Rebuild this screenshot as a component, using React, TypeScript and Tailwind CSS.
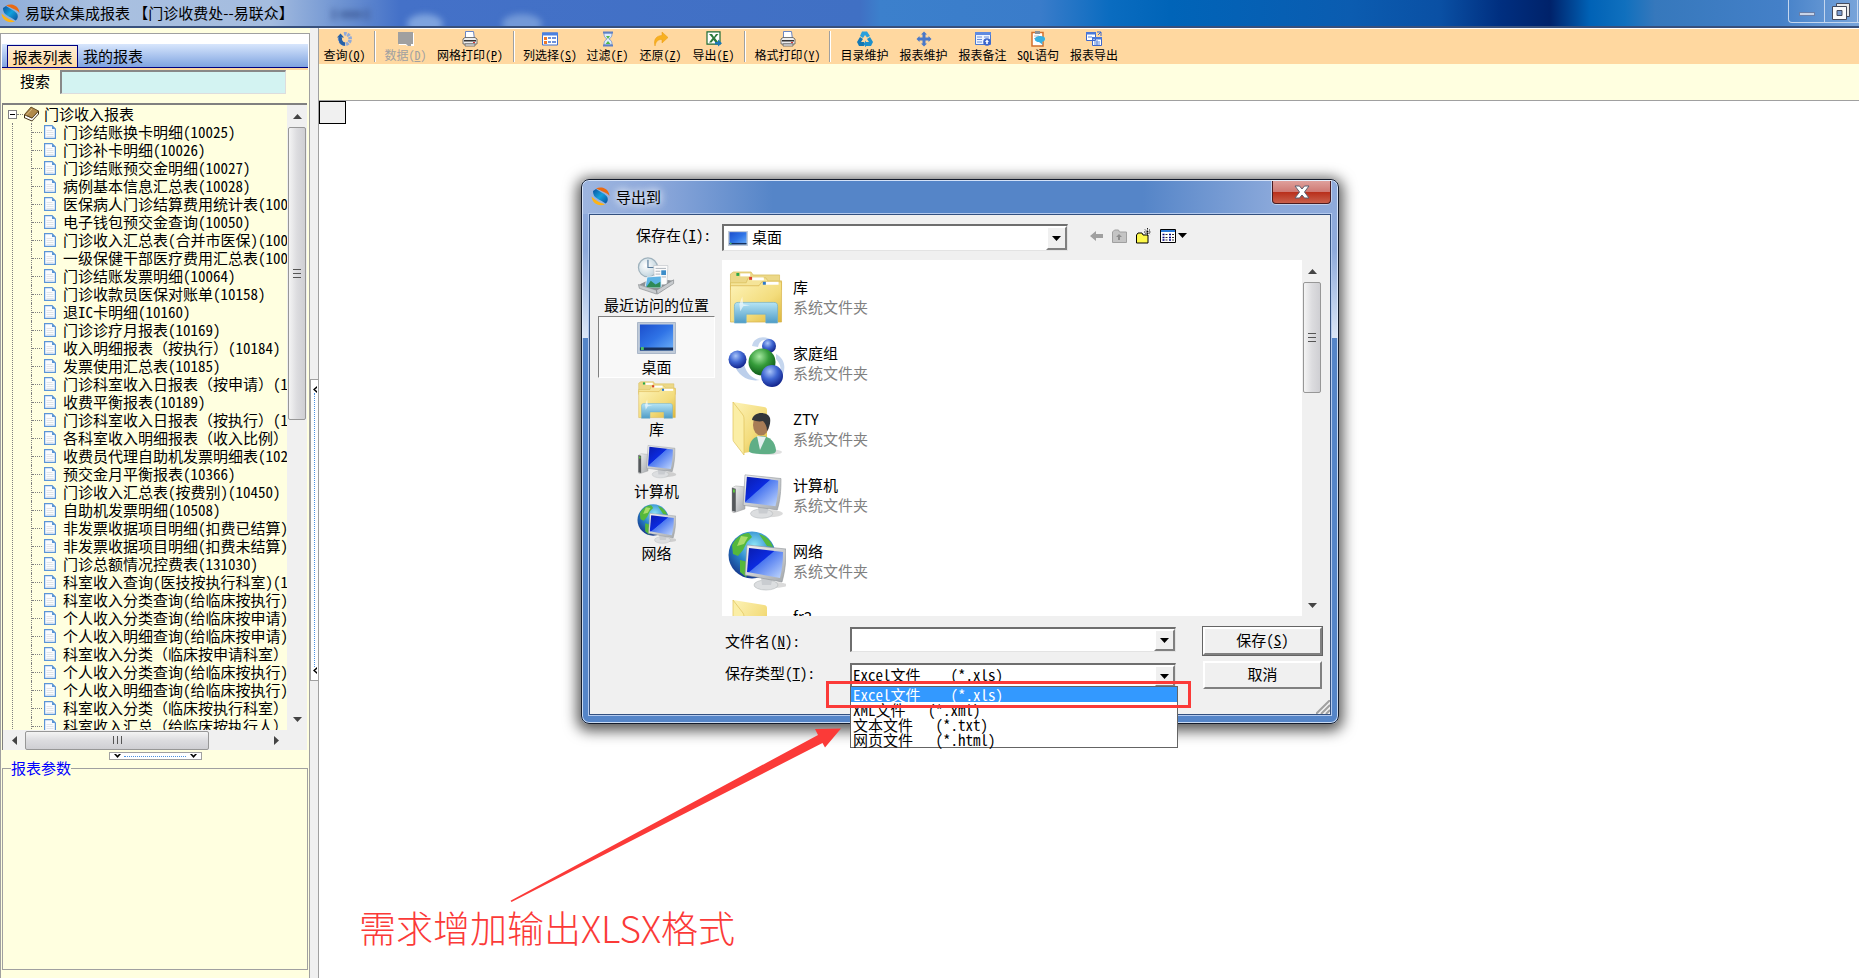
import { useState } from 'react';
import type { ReactNode } from 'react';
import clsx from 'clsx';

const reports = [
  '门诊结账换卡明细(10025)',
  '门诊补卡明细(10026)',
  '门诊结账预交金明细(10027)',
  '病例基本信息汇总表(10028)',
  '医保病人门诊结算费用统计表(10040)',
  '电子钱包预交金查询(10050)',
  '门诊收入汇总表(合并市医保)(10060)',
  '一级保健干部医疗费用汇总表(10062)',
  '门诊结账发票明细(10064)',
  '门诊收款员医保对账单(10158)',
  '退IC卡明细(10160)',
  '门诊诊疗月报表(10169)',
  '收入明细报表（按执行）(10184)',
  '发票使用汇总表(10185)',
  '门诊科室收入日报表（按申请）(10186)',
  '收费平衡报表(10189)',
  '门诊科室收入日报表（按执行）(10190)',
  '各科室收入明细报表（收入比例）',
  '收费员代理自助机发票明细表(10200)',
  '预交金月平衡报表(10366)',
  '门诊收入汇总表(按费别)(10450)',
  '自助机发票明细(10508)',
  '非发票收据项目明细(扣费已结算)',
  '非发票收据项目明细(扣费未结算)',
  '门诊总额情况控费表(131030)',
  '科室收入查询(医技按执行科室)(131040)',
  '科室收入分类查询(给临床按执行)',
  '个人收入分类查询(给临床按申请)',
  '个人收入明细查询(给临床按申请)',
  '科室收入分类（临床按申请科室）',
  '个人收入分类查询(给临床按执行)',
  '个人收入明细查询(给临床按执行)',
  '科室收入分类（临床按执行科室）',
  '科室收入汇总（给临床按执行人）',
];

const fileTypes = [
  'Excel文件\u00a0\u00a0\u00a0\u00a0(*.xls)',
  'XML文件\u00a0\u00a0\u00a0(*.xml)',
  '文本文件\u00a0\u00a0\u00a0(*.txt)',
  '网页文件\u00a0\u00a0\u00a0(*.html)',
];

/* ---------- shared gradients ---------- */

function Gradients() {
  return (
    <svg className="absolute h-0 w-0" aria-hidden="true">
      <defs>
        <linearGradient id="folder" x1="0" y1="0" x2="1" y2="1">
          <stop offset="0" stopColor="#fdf3b8" />
          <stop offset="0.6" stopColor="#f3dc7c" />
          <stop offset="1" stopColor="#dcb63c" />
        </linearGradient>
        <linearGradient id="stand" x1="0" y1="0" x2="0" y2="1">
          <stop offset="0" stopColor="#b5e4f5" />
          <stop offset="1" stopColor="#4f9cc6" />
        </linearGradient>
        <linearGradient id="screen" x1="0" y1="0" x2="1" y2="1">
          <stop offset="0" stopColor="#0a1cae" />
          <stop offset="0.42" stopColor="#0b2be0" />
          <stop offset="0.44" stopColor="#4c78f0" />
          <stop offset="1" stopColor="#c2d8fc" />
        </linearGradient>
        <linearGradient id="desk" x1="0" y1="0" x2="1" y2="1">
          <stop offset="0" stopColor="#1c4fcc" />
          <stop offset="0.5" stopColor="#2f73e6" />
          <stop offset="1" stopColor="#6db0f8" />
        </linearGradient>
        <linearGradient id="metal" x1="0" y1="0" x2="1" y2="1">
          <stop offset="0" stopColor="#f5f5f5" />
          <stop offset="1" stopColor="#a3a7ab" />
        </linearGradient>
        <radialGradient id="ballBlue" cx="0.4" cy="0.3" r="0.7">
          <stop offset="0" stopColor="#a9c4f8" />
          <stop offset="0.5" stopColor="#3f66d2" />
          <stop offset="1" stopColor="#12248c" />
        </radialGradient>
        <radialGradient id="ballGreen" cx="0.4" cy="0.3" r="0.7">
          <stop offset="0" stopColor="#a5e8a0" />
          <stop offset="0.5" stopColor="#359c3a" />
          <stop offset="1" stopColor="#0f5a1a" />
        </radialGradient>
        <radialGradient id="globe" cx="0.55" cy="0.3" r="0.75">
          <stop offset="0" stopColor="#8fe6f8" />
          <stop offset="0.5" stopColor="#2a86cc" />
          <stop offset="1" stopColor="#132f86" />
        </radialGradient>
        <radialGradient id="clock" cx="0.4" cy="0.4" r="0.7">
          <stop offset="0" stopColor="#ffffff" />
          <stop offset="1" stopColor="#b9cfda" />
        </radialGradient>
        <linearGradient id="logoBlue" x1="0" y1="0" x2="1" y2="1">
          <stop offset="0" stopColor="#0a4f9c" />
          <stop offset="0.5" stopColor="#12a0dc" />
          <stop offset="1" stopColor="#0a4f9c" />
        </linearGradient>
      </defs>
    </svg>
  );
}

/* ---------- big icons ---------- */

function LogoIcon() {
  return (
    <svg className="h-[19px] w-[19px] shrink-0" viewBox="0 0 19 19">
      <path d="M5 1.500C10-1 18 1 18.500 9c-2-3-5-3.500-8-5C8.500 3.200 7 2 5 1.500z" fill="#ea6a12" />
      <path d="M.5 9.500C1 15.500 7 20 14 17.500c-3-1.500-6-2-8.500-4C3.500 12 2 11 .5 9.500z" fill="#fdb416" />
      <path d="M2 4l3-2c4 3 9.500 4.500 11.500 8.500.8 2.300 0 5-2 6C11 13.500 5 12 3 8.500 2.200 7 2 5.500 2 4z" fill="url(#logoBlue)" />
    </svg>
  );
}

function LibraryIcon({ className }: { className: string }) {
  return (
    <svg className={className} viewBox="0 0 56 54">
      <path d="M2 3l3-2h18l2 3h27v12H2z" fill="#ecd888" stroke="#d8bb58" strokeWidth="0.7" />
      <path d="M12 2.500h10v3H12z" fill="#fff" />
      <path d="M8 2h3v3H8z" fill="#2aa84a" />
      <path d="M2 12h16l2-5h18l2 3h14v9H2z" fill="#f5e498" stroke="#d8bb58" strokeWidth="0.7" />
      <path d="M24 6.500h12v3H24z" fill="#fff" />
      <path d="M21 6h3v3h-3z" fill="#d8402a" />
      <path d="M2 15h29l3-4h20v41H2z" fill="url(#folder)" stroke="#d8b24a" strokeWidth="0.7" />
      <path d="M38 11h13v3H38z" fill="#fff" />
      <path d="M35 11h3v3h-3z" fill="#2a78d0" />
      <path d="M6 53V36c0-3 1-4 4-4h36c3 0 4 1 4 4v17H38V44H18v9z" fill="url(#stand)" stroke="#6fb0cf" strokeWidth="0.7" />
      <path d="M11 34l3-8 1 8 7 1-7 1-3 5z" fill="#fff" opacity="0.6" />
    </svg>
  );
}

function HomeGroupIcon({ className }: { className: string }) {
  return (
    <svg className={className} viewBox="0 0 58 54">
      <path d="M24 10C26 0 38-1 45 5c-8-3-14-1-15 6z" fill="#c5d6ee" />
      <path d="M6 28c4 12 14 18 26 16-8-1-14-7-16-16z" fill="#bccfeb" />
      <path d="M48 18c8 4 12 14 4 26 2-9 1-16-4-21z" fill="#c5d6ee" />
      <circle cx="41" cy="10" r="7" fill="url(#ballBlue)" />
      <circle cx="9.500" cy="23.500" r="9" fill="url(#ballBlue)" />
      <circle cx="34" cy="26" r="13.500" fill="url(#ballGreen)" />
      <circle cx="44" cy="40" r="11" fill="url(#ballBlue)" />
    </svg>
  );
}

function UserFolderIcon({ className }: { className: string }) {
  return (
    <svg className={className} viewBox="0 0 58 56">
      <path d="M5 1l31 5c3 .5 3 2 3 4v38L16 52z" fill="url(#folder)" />
      <path d="M5 1l10 13c1 2 1 3 1 6v34L6 41c-1-1-1-2-1-4z" fill="#fbeea6" stroke="#e0c25a" strokeWidth="0.7" />
      <ellipse cx="40" cy="51" rx="14" ry="3" fill="#000" opacity="0.12" />
      <path d="M21 50c0-10 5-15 12-15 8 0 14 5 15 14 0 4-3 4-13 4-9 0-14-1-14-3z" fill="#5fae86" />
      <path d="M29 35l3 14 6-13z" fill="#e6eff0" />
      <ellipse cx="33" cy="24" rx="8" ry="10.500" fill="#a87c56" />
      <path d="M24 19c1-9 16-9 18-2 1 5-1 10-3 13 0-5-2-8-4-10-4 1-7 0-11-1z" fill="#33363a" />
    </svg>
  );
}

function FolderIcon({ className }: { className: string }) {
  return (
    <svg className={className} viewBox="0 0 58 56">
      <path d="M5 1l31 5c3 .5 3 2 3 4v38L16 52z" fill="url(#folder)" />
      <path d="M17 17l18 3v10H17z" fill="#d9d9d4" />
      <path d="M5 1l10 13c1 2 1 3 1 6v34L6 41c-1-1-1-2-1-4z" fill="#fbeea6" stroke="#e0c25a" strokeWidth="0.7" />
    </svg>
  );
}

function ComputerIcon({ className }: { className: string }) {
  return (
    <svg className={className} viewBox="0 0 58 52">
      <path d="M2 16l4-2 10 1v24L4 43l-2-1z" fill="url(#metal)" stroke="#9b9b9b" strokeWidth="0.5" />
      <path d="M2 16l4 1v25l-4-1z" fill="#55595c" />
      <path d="M3 18h2v3H3z" fill="#58c83a" />
      <ellipse cx="42" cy="44" rx="15" ry="4" fill="#000" opacity="0.14" />
      <ellipse cx="34" cy="44" rx="12" ry="5" fill="#dcdee0" stroke="#b4b8bb" strokeWidth="0.6" />
      <path d="M30 36h12l-2 8h-9z" fill="#c9ccd0" />
      <path d="M16 2l39 4c0 14-1 24-4 34L14 35z" fill="url(#metal)" stroke="#8d9297" strokeWidth="0.6" />
      <path d="M18 4l34 4c0 11-1 20-3 28L16 32z" fill="url(#screen)" />
    </svg>
  );
}

function NetworkIcon({ className }: { className: string }) {
  return (
    <svg className={className} viewBox="0 0 58 60">
      <circle cx="24" cy="24" r="23.500" fill="url(#globe)" />
      <path d="M4 14C8 6 15 2 21 2l3 4-5 5-4 8-5 6-5-2zM12 29l8 2 3 7-5 8-6-5zM31 3c7 2 12 7 14 13l-6-1-4-6z" fill="#55b83c" />
      <path d="M13 5l7 1-4 7-7 2z" fill="#a8dd6a" />
      <ellipse cx="46" cy="54" rx="13" ry="3" fill="#000" opacity="0.14" />
      <ellipse cx="38" cy="54" rx="12" ry="5" fill="#dcdee0" stroke="#b4b8bb" strokeWidth="0.6" />
      <path d="M33 46h12l-2 8h-9z" fill="#c9ccd0" />
      <path d="M19 14l39 4c0 13-1 22-4 33L17 44z" fill="url(#metal)" stroke="#8d9297" strokeWidth="0.6" />
      <path d="M21 17l34 4c0 10-1 18-3 26L19 41z" fill="url(#screen)" />
    </svg>
  );
}

function RecentIcon({ className }: { className: string }) {
  return (
    <svg className={className} viewBox="0 0 40 40">
      <circle cx="11" cy="11" r="10" fill="url(#clock)" stroke="#9fb2bd" strokeWidth="1.300" />
      <path d="M11 3v8h7" fill="none" stroke="#54799a" strokeWidth="1.200" />
      <path d="M2 29l14-7 22 3-14 12z" fill="#8d9195" />
      <path d="M17 9h15l-1 20H18z" fill="#fcfcfc" stroke="#c0c4c8" strokeWidth="0.7" />
      <path d="M19 12h11M19 15h5M19 18h5M19 21h11" stroke="#a8b0b8" strokeWidth="1" />
      <path d="M25 14h5v5h-5z" fill="#3d8dc9" />
      <path d="M10 21l15-1v12H8z" fill="#5eb3e4" stroke="#fff" strokeWidth="0.8" />
      <path d="M9 32l5-7 5 4 5-3v6z" fill="#2f8a56" />
      <path d="M1 29l19 6v4L2 33zM20 35l18-11v4L21 39z" fill="#c8cbce" stroke="#85898c" strokeWidth="0.7" />
    </svg>
  );
}

function DesktopIcon({ className }: { className: string }) {
  return (
    <svg className={className} viewBox="0 0 40 32" preserveAspectRatio="none">
      <path d="M.5.5h39v31H.5z" fill="#c0cbd9" stroke="#a9b6c8" />
      <path d="M3 2.500h34v26H3z" fill="url(#desk)" />
      <path d="M3 25.500h34v3H3z" fill="#16305c" />
      <path d="M4 25h3v3H4z" fill="#4bbd6a" />
    </svg>
  );
}

/* ---------- toolbar icons ---------- */

const small = 'h-4 w-4';

function PrinterIcon() {
  return (
    <svg className={small} viewBox="0 0 16 16">
      <path d="M3.500.5h8l1 8h-9z" fill="#fff" stroke="#6a86c4" />
      <path d="M1 8l2-1.500h10L15 8v5H1z" fill="#ececec" stroke="#555" strokeWidth="0.8" />
      <path d="M2 9h12v1.500H2z" fill="#333" />
      <path d="M11 11h2v1h-2z" fill="#d33" />
      <path d="M3 13h10v2H3z" fill="#fff" stroke="#555" strokeWidth="0.8" />
    </svg>
  );
}

const icons: Record<string, ReactNode> = {
  query: (
    <svg className={small} viewBox="0 0 16 16">
      <path d="M7 2.800A5.300 5.300 0 1 1 3 6" fill="none" stroke="#8fa9da" strokeWidth="3.600" strokeDasharray="2.600 0.800" />
      <path d="M3.500 6a5.300 5.300 0 0 0 4.500 7.200" fill="none" stroke="#2660a6" strokeWidth="3.600" />
      <path d="M0 6.500l3.500-4L7 6.500z" fill="#2660a6" />
    </svg>
  ),
  data: (
    <svg className={small} viewBox="0 0 16 16">
      <path d="M1 2h15v13H9l-1-1H1z" fill="#fff" />
      <path d="M0 1h15v12h-2v2h-3l-2-2H0z" fill="#a0a0a0" />
    </svg>
  ),
  print: <PrinterIcon />,
  columns: (
    <svg className={small} viewBox="0 0 16 16">
      <path d="M.5 2h15v12H.5z" fill="#fff" stroke="#3d6fd0" />
      <path d="M0 1.500h16v3H0z" fill="#4a80e0" />
      <path d="M2 6h3v3H2zM2 10h3v3H2z" fill="#f07828" />
      <path d="M6 7h3M10 7h4M6 11h3M10 11h4" stroke="#3d6fd0" strokeWidth="1.500" />
    </svg>
  ),
  filter: (
    <svg className={small} viewBox="0 0 16 16">
      <path d="M4 2h8c0 4-1 4.500-3 6 2 1.500 3 2 3 6H4c0-4 1-4.500 3-6C5 6.500 4 6 4 2z" fill="#dcecff" stroke="#6a8cc8" strokeWidth="0.8" />
      <path d="M3 .5h10v2H3zM3 13.500h10v2H3z" fill="#5f80c4" />
      <path d="M6 5h4L8 8zM5.500 13L8 10l2.500 3z" fill="#56b848" />
    </svg>
  ),
  restore: (
    <svg className={small} viewBox="0 0 16 16">
      <path d="M2 15C0 8 4 4.500 9 4.500V1l6 5.500L9 12V8.500C5 8.500 3 10 2 15z" fill="#f8b020" stroke="#e89a10" strokeWidth="0.5" />
    </svg>
  ),
  excel: (
    <svg className={small} viewBox="0 0 16 16">
      <path d="M1 .8h13v12.400H1z" fill="#fff" stroke="#1d6b34" strokeWidth="1.200" />
      <path d="M3 3h3l2 3 2-3h2.500L9 7l3.500 4.500h-3L7.500 9 5.500 11.500H3L6.500 7z" fill="#2c7a3c" />
      <path d="M9 11h3V8.500l4 3.700-4 3.300V13.500H9z" fill="#1c78b8" />
    </svg>
  ),
  recycle: (
    <svg className={small} viewBox="0 0 16 16">
      <path d="M5 .5h5L13 5l-3 1.500L8 4 6 7 3 5z" fill="#2aa0dc" />
      <path d="M3 6l3 2-2 3h3v4H2L0 11z" fill="#1478b4" />
      <path d="M13 6l3 5-2 4H9v1.500L6.500 13 9 9.500V11h3l-2-3z" fill="#1e90cc" />
    </svg>
  ),
  move: (
    <svg className={small} viewBox="0 0 16 16">
      <path d="M8 .5l3 3H9.500v3h3V5l3 3-3 3V9.500h-3v3H11l-3 3-3-3h1.500v-3h-3V11l-3-3 3-3v1.500h3v-3H5z" fill="#4a78c8" />
    </svg>
  ),
  remark: (
    <svg className={small} viewBox="0 0 16 16">
      <path d="M.5 1.500h15v12H.5z" fill="#eef4ff" stroke="#4a78d0" />
      <path d="M0 1h16v3H0z" fill="#5f8ae0" />
      <path d="M2 6h5M2 8.500h5M2 11h5M9 6h5" stroke="#6a90dc" />
      <circle cx="12" cy="11" r="3.800" fill="#3c66cc" />
      <path d="M12 8.500l2 2.500h-1.200v2h-1.600v-2H10z" fill="#fff" />
    </svg>
  ),
  sql: (
    <svg className={small} viewBox="0 0 16 16">
      <path d="M2 1.500h11v13.500H2z" fill="#fff" stroke="#d4702c" strokeWidth="1.500" />
      <path d="M5 0h5v3H5z" fill="#8c9298" />
      <path d="M4 5h5M4 7.500h3" stroke="#bbb" />
      <path d="M5.500 6.500c3-2 9-2 9.500 1 .3 2-1 3-3 3.500L13 14l-4-3c-4 0-5-2.500-3.500-4.500z" fill="#38b0e0" />
    </svg>
  ),
  reportExport: (
    <svg className={small} viewBox="0 0 16 16">
      <path d="M.5 1.500h9v8h-9zM6.500 6.500h9v8h-9z" fill="#fff" stroke="#3c66cc" />
      <path d="M0 1h10v2.500H0zM6 6h10v2.500H6z" fill="#4a78d8" />
      <path d="M8 11h6M8 13h6M11 9v5M2 6h4" stroke="#5f88dc" />
      <path d="M11 1h4v4M15 1l-3 3" fill="none" stroke="#3c66cc" />
    </svg>
  ),
};

interface Tool {
  icon?: string;
  text?: string;
  hotkey?: string;
  width: string;
  disabled?: boolean;
}

const sep: Tool = { width: 'w-2.5' };

const tools: Tool[] = [
  { icon: 'query', text: '查询', hotkey: 'Q', width: 'w-[51px]' },
  sep,
  { icon: 'data', text: '数据', hotkey: 'D', width: 'w-[51px]', disabled: true },
  { icon: 'print', text: '网格打印', hotkey: 'P', width: 'w-[78px]' },
  sep,
  { icon: 'columns', text: '列选择', hotkey: 'S', width: 'w-[62px]' },
  { icon: 'filter', text: '过滤', hotkey: 'F', width: 'w-[53px]' },
  { icon: 'restore', text: '还原', hotkey: 'Z', width: 'w-[53px]' },
  { icon: 'excel', text: '导出', hotkey: 'E', width: 'w-[53px]' },
  sep,
  { icon: 'print', text: '格式打印', hotkey: 'Y', width: 'w-[75px]' },
  sep,
  { icon: 'recycle', text: '目录维护', width: 'w-[59px]' },
  { icon: 'move', text: '报表维护', width: 'w-[59px]' },
  { icon: 'remark', text: '报表备注', width: 'w-[59px]' },
  { icon: 'sql', text: 'SQL语句', width: 'w-[52px]' },
  { icon: 'reportExport', text: '报表导出', width: 'w-[60px]' },
];

function Toolbar() {
  return (
    <div className="flex h-9 items-stretch border-t border-white bg-[#ffd8a0]">
      {tools.map((tool, index) =>
        tool.text ? (
          <button
            key={index}
            disabled={tool.disabled}
            className={clsx(
              'flex shrink-0 flex-col items-center pt-0.5 text-xs leading-4 whitespace-nowrap',
              tool.width,
              tool.disabled ? 'text-[#a0a0a0]' : 'text-black',
            )}
          >
            {icons[tool.icon!]}
            <span>
              {tool.text}
              {tool.hotkey && (
                <>
                  (<u>{tool.hotkey}</u>)
                </>
              )}
            </span>
          </button>
        ) : (
          <div key={index} className={clsx('flex justify-center py-0.5', tool.width)}>
            <span className="w-0.5 border-r border-l border-r-white border-l-[#a0a0a0]" />
          </div>
        ),
      )}
    </div>
  );
}

/* ---------- scrollbars ---------- */

function VScroll({ thumb }: { thumb: string }) {
  return (
    <div className="flex w-5 shrink-0 flex-col items-center bg-[#f0f0f0] px-px">
      <div className="flex h-[22px] items-center">
        <svg className="h-[5px] w-[9px]" viewBox="0 0 9 5">
          <path d="M4.500 0L9 5H0z" fill="#444" />
        </svg>
      </div>
      <div
        className={clsx(
          'flex w-full flex-col items-center justify-center gap-[3px] rounded-xs border border-[#979797] bg-linear-to-r from-[#f4f4f4] via-[#dcdcdf] to-[#cfcfd3]',
          thumb,
        )}
      >
        <span className="h-px w-2 bg-[#555]" />
        <span className="h-px w-2 bg-[#555]" />
        <span className="h-px w-2 bg-[#555]" />
      </div>
      <div className="mt-auto flex h-[22px] items-center">
        <svg className="h-[5px] w-[9px]" viewBox="0 0 9 5">
          <path d="M0 0h9L4.500 5z" fill="#444" />
        </svg>
      </div>
    </div>
  );
}

function HScroll() {
  return (
    <div className="flex h-5 shrink-0 items-center bg-[#f0f0f0] pr-5">
      <div className="flex w-[22px] justify-center">
        <svg className="h-[9px] w-[5px]" viewBox="0 0 5 9">
          <path d="M5 0v9L0 4.500z" fill="#444" />
        </svg>
      </div>
      <div className="flex h-[19px] w-[184px] items-center justify-center gap-[3px] rounded-xs border border-[#979797] bg-linear-to-b from-[#f4f4f4] via-[#dcdcdf] to-[#cfcfd3]">
        <span className="h-2 w-px bg-[#555]" />
        <span className="h-2 w-px bg-[#555]" />
        <span className="h-2 w-px bg-[#555]" />
      </div>
      <div className="ml-auto flex w-[22px] justify-center">
        <svg className="h-[9px] w-[5px]" viewBox="0 0 5 9">
          <path d="M0 0v9l5-4.500z" fill="#444" />
        </svg>
      </div>
    </div>
  );
}

/* ---------- left side ---------- */

function PageIcon() {
  return (
    <svg className="h-3.5 w-3 shrink-0" viewBox="0 0 12 14">
      <path d="M.6.6h7.400l3.400 3.400v9.400H.6z" fill="#fafcff" stroke="#5b95d6" strokeWidth="1.200" />
      <path d="M8 .6v3.400h3.400z" fill="#5b95d6" />
      <path d="M2.500 5.500h6M2.500 7.500h7M2.500 9.500h7M2.500 11.500h7" stroke="#d9dde2" strokeWidth="0.8" />
    </svg>
  );
}

function BookIcon() {
  return (
    <svg className="h-4 w-[17px] shrink-0" viewBox="0 0 17 16">
      <path d="M1 9l7-8 8 4v3l-7 7.500L1 12z" fill="#3a2a10" />
      <path d="M2 9.500l7 3 6-6.500v2l-6 6.500-7-3z" fill="#fff" />
      <path d="M1.500 8.500L8 1l7.500 4L9 12z" fill="#b08a4a" stroke="#4a3718" strokeWidth="0.6" />
      <path d="M3 9.500L9 3" stroke="#e0c48c" strokeWidth="0.8" />
    </svg>
  );
}

function ReportTree() {
  return (
    <div className="mr-0.5 ml-px flex min-h-0 flex-1 flex-col border-t-2 border-l border-[#808080]">
      <div className="flex min-h-0 flex-1">
        <div className="min-w-0 flex-1 overflow-hidden pl-[5px] text-[15px] leading-[18px] whitespace-nowrap">
          <div className="flex h-[18px] items-center">
            <button aria-label="折叠" className="flex h-[9px] w-[9px] items-center justify-center border border-[#808080] bg-white">
              <span className="h-px w-[5px] bg-black" />
            </button>
            <span className="w-1.5 border-t border-dotted border-[#808080]" />
            <BookIcon />
            <span className="ml-1">门诊收入报表</span>
          </div>
          <ul className="ml-1 border-l border-dotted border-[#808080] pl-[18px]">
            {reports.map((name) => (
              <li key={name} className="flex h-[18px] items-center border-l border-dotted border-[#808080]">
                <span className="mr-0.5 w-2.5 shrink-0 border-t border-dotted border-[#808080]" />
                <PageIcon />
                <a href="#report" className="ml-[7px] text-black">
                  {name}
                </a>
              </li>
            ))}
          </ul>
        </div>
        <VScroll thumb="h-[293px]" />
      </div>
      <HScroll />
    </div>
  );
}

function Sidebar() {
  return (
    <aside className="flex w-[310px] shrink-0 flex-col pt-[5px]">
      <div className="flex min-h-0 flex-1 flex-col border-t border-r border-l border-[#a0a0a0]">
        <div className="bg-white px-px pt-2.5">
          <div className="flex h-6 items-end border-b border-[#000080] bg-linear-to-b from-[#d8e6fc] to-[#80a4e0] pl-[5px]">
            <button className="h-[22px] w-[71px] border border-b-0 border-[#000080] bg-linear-to-b from-[#fff0d8] to-[#ffd8a0] text-[15px] leading-5">
              报表列表
            </button>
            <button className="h-[22px] w-[70px] text-[15px] leading-5">我的报表</button>
          </div>
          <div className="h-0.5 bg-[#ffd8a0]" />
        </div>
        <div className="flex h-[33px] items-start pl-[19px]">
          <label htmlFor="search" className="w-10 pt-px text-[15px] leading-5">
            搜索
          </label>
          <input
            id="search"
            className="h-6 w-[226px] border-t-2 border-r border-b border-l-2 border-t-[#888] border-r-[#ddd] border-b-[#ddd] border-l-[#888] bg-[#d3f3f2] px-1 text-sm outline-none"
          />
        </div>
        <ReportTree />
        <div className="flex h-2.5 shrink-0 items-center justify-center pt-0.5">
          <div className="flex h-2 w-[93px] items-center justify-between border border-[#a0a0a0] bg-white px-1">
            <svg className="h-1 w-[7px]" viewBox="0 0 7 4">
              <path d="M0 0h2l1.500 1.500L5 0h2L3.500 4z" />
            </svg>
            <span className="w-[62px] border-t border-dotted border-[#4a90e0]" />
            <svg className="h-1 w-[7px]" viewBox="0 0 7 4">
              <path d="M0 0h2l1.500 1.500L5 0h2L3.500 4z" />
            </svg>
          </div>
        </div>
        <fieldset className="mx-px mb-2 h-[210px] shrink-0 border border-[#a0a0a0] px-2">
          <legend className="text-[15px] leading-4 text-[#0000ff]">报表参数</legend>
        </fieldset>
      </div>
    </aside>
  );
}

function Splitter() {
  return (
    <div className="flex w-[9px] shrink-0 flex-col justify-center border-r border-[#a0a0a0] bg-[#f0f0f0] pt-[54px]">
      <button aria-label="收起侧栏" className="flex h-[302px] w-2 flex-col items-center justify-between border border-r-0 border-[#a0a0a0] bg-white py-1.5">
        <svg className="h-[7px] w-1" viewBox="0 0 4 7">
          <path d="M4 0v2L2 3.500 4 5v2L0 3.500z" />
        </svg>
        <span className="flex-1 border-l border-dotted border-[#4a90e0]" />
        <svg className="h-[7px] w-1" viewBox="0 0 4 7">
          <path d="M4 0v2L2 3.500 4 5v2L0 3.500z" />
        </svg>
      </button>
    </div>
  );
}

/* ---------- title bar ---------- */

function TitleBar() {
  return (
    <header className="relative flex h-7 shrink-0 items-start overflow-hidden border-b-2 border-[#38507c] bg-[linear-gradient(to_right,#8fadd9_0px,#a9c0e0_100px,#a4bcdf_270px,#6f94d2_340px,#4471c8_400px,#4070c4_860px,#3c80cc_880px,#3a7cca_1040px,#0a6cc0_1110px,#0064b8_1170px,#0b5cb0_1350px,#0a50a4_1440px,#002f80_1500px,#00226a_1550px,#0062b6_1590px,#1070be_1625px,#3678bc_1655px,#4480c8_1780px,#78a4da_1859px)]">
      <svg className="absolute top-0 left-[270px] h-[26px] w-[300px]" viewBox="0 0 300 26">
        <g style={{ filter: 'blur(3px)' }}>
          <ellipse cx="155" cy="24" rx="18" ry="10" fill="#7ea3de" />
          <ellipse cx="252" cy="24" rx="20" ry="10" fill="#7399d8" />
          <path d="M62 9h4v11h-4zM70 11h22v7H70zM95 9h4v11h-4z" fill="#3c5894" opacity="0.7" />
        </g>
      </svg>
      <div className="relative flex min-w-0 flex-1 items-center gap-[5px] pt-[3px] pl-px">
        <LogoIcon />
        <h1 className="font-['Noto_Sans_CJK_SC',sans-serif] text-[15px] leading-5 whitespace-nowrap text-black">
          易联众集成报表 【门诊收费处--易联众】
        </h1>
      </div>
      <div className="relative flex h-[23px] rounded-bl-sm border-b border-l border-[#c4d6ee]">
        <button aria-label="最小化" className="flex w-9 items-end justify-center border-r border-[#c4d6ee] pb-1.5">
          <span className="h-1 w-4 border border-[#6a7fa8] bg-[#c8d4e8]" />
        </button>
        <button aria-label="还原" className="mr-px flex w-[33px] items-center justify-center border-r border-[#c4d6ee]">
          <svg className="h-[17px] w-[18px]" viewBox="0 0 18 17">
            <path d="M4.500.500h13v13h-13z" fill="#e8e8e8" stroke="#444a5c" />
            <path d="M.5 3.500h14v13H.5z" fill="#fafafa" stroke="#444a5c" />
            <path d="M5 7.500h5v5H5z" fill="#7a9cd0" stroke="#444a5c" />
          </svg>
        </button>
      </div>
    </header>
  );
}

/* ---------- export dialog ---------- */

const places = [
  { name: '最近访问的位置', icon: <RecentIcon className="h-[38px] w-[39px]" /> },
  { name: '桌面', icon: <DesktopIcon className="h-8 w-[39px]" /> },
  { name: '库', icon: <LibraryIcon className="h-[38px] w-10" /> },
  { name: '计算机', icon: <ComputerIcon className="h-9 w-10" /> },
  { name: '网络', icon: <NetworkIcon className="h-10 w-[39px]" /> },
];

const folders = [
  { name: '库', icon: <LibraryIcon className="h-[53px] w-14" /> },
  { name: '家庭组', icon: <HomeGroupIcon className="h-[54px] w-[58px]" /> },
  { name: 'ZTY', icon: <UserFolderIcon className="h-14 w-[58px]" /> },
  { name: '计算机', icon: <ComputerIcon className="h-[52px] w-[58px] pt-1" /> },
  { name: '网络', icon: <NetworkIcon className="h-[60px] w-[58px]" /> },
  { name: 'fr3', icon: <FolderIcon className="h-14 w-[58px]" /> },
];

const sunken = 'border-t-2 border-l-2 border-r border-b border-t-[#6e6e6e] border-l-[#6e6e6e] border-r-[#e3e3e3] border-b-[#e3e3e3] bg-white';
const raised = 'border-t-2 border-l-2 border-r-2 border-b-2 border-t-white border-l-white border-r-[#808080] border-b-[#808080] bg-[#f0f0f0]';

function ComboArrow() {
  return (
    <span className={clsx('pointer-events-none flex w-[21px] shrink-0 items-center justify-center', raised)}>
      <svg className="h-[5px] w-[9px]" viewBox="0 0 9 5">
        <path d="M0 0h9L4.500 5z" />
      </svg>
    </span>
  );
}

function LocationTools() {
  return (
    <div className="ml-[22px] flex items-center gap-2 pb-1">
      <button aria-label="后退">
        <svg className="h-3.5 w-3.5" viewBox="0 0 14 14">
          <path d="M0 7l6-5v3h7v4H6v3z" fill="#a0a0a0" />
        </svg>
      </button>
      <button aria-label="向上一级">
        <svg className="h-3.5 w-4" viewBox="0 0 16 14">
          <path d="M.5 3l2-2h4l1 2h7v10.500H.5z" fill="#c4c4c4" stroke="#a0a0a0" />
          <path d="M7 5l3 3H8v3H6V8H4z" fill="#8c8c8c" />
        </svg>
      </button>
      <button aria-label="新建文件夹">
        <svg className="h-4 w-4" viewBox="0 0 16 16">
          <path d="M.5 7L2 5h4l1 2h5v8H.5z" fill="#fdf84a" stroke="#000" />
          <path d="M11.500 0v8M8 4h7.500M9 1.500l5 5M14 1.500l-5 5" stroke="#000" strokeWidth="0.9" strokeDasharray="1.500 1" />
        </svg>
      </button>
      <button aria-label="查看" className="flex items-center gap-0.5">
        <svg className="h-3.5 w-4" viewBox="0 0 16 14">
          <path d="M.5.5h15v13H.5z" fill="#fff" stroke="#000" />
          <path d="M1 1h14v2H1z" fill="#2a7ad8" />
          <path d="M2.500 5.500h2M2.500 8.500h2M2.500 11h2M9 5.500h2M9 8.500h2M9 11h2" stroke="#000080" strokeWidth="1.500" />
          <path d="M5.500 5.500h2M5.500 8.500h2M5.500 11h2M12 5.500h2M12 8.500h2M12 11h2" stroke="#333" />
        </svg>
        <svg className="h-[5px] w-[9px]" viewBox="0 0 9 5">
          <path d="M0 0h9L4.500 5z" />
        </svg>
      </button>
    </div>
  );
}

function ExportDialog() {
  const [fileType, setFileType] = useState(0);
  const [place, setPlace] = useState(1);

  return (
    <div
      role="dialog"
      aria-label="导出到"
      className="absolute top-[179px] left-[581px] flex w-[758px] flex-col rounded-lg border border-[#141c2c] bg-[linear-gradient(to_bottom,#8eaadb_0px,#8eaadb_70px,#dbe6f6_158px,#5585c8_158px)] px-[7px] pb-2 text-[15px] leading-[18px] shadow-[0_3px_14px_4px_rgba(0,0,0,0.65),inset_0_0_0_1px_rgba(230,240,255,0.8)]"
    >
      <div className="-mx-1.5 mt-px flex h-[33px] items-start rounded-t-md bg-[linear-gradient(to_right,#9db5df_0px,#8ea9db_70px,#5585c8_190px,#5585c8_560px,#8aa8da_690px,#8eaadb_750px)]">
        <div className="flex items-center gap-1.5 pt-1.5 pl-2">
          <LogoIcon />
          <span className="[text-shadow:0_0_8px_#fff,0_0_8px_#fff]">导出到</span>
        </div>
        <button
          aria-label="关闭"
          className="mr-1.5 ml-auto flex h-[23px] w-[59px] items-center justify-center rounded-b border border-t-0 border-[#4c1c20] bg-[linear-gradient(to_bottom,#dfa09c_0%,#cf7a74_48%,#b9301c_52%,#c9604c_100%)] shadow-[0_0_0_1px_rgba(255,255,255,0.45)]"
        >
          <svg className="h-3.5 w-4" viewBox="0 0 16 14">
            <path d="M1 1h4.500L8 4l2.500-3H15l-4.500 6 4.500 6h-4.500L8 10l-2.500 3H1l4.500-6z" fill="#fff" stroke="#5a5f70" />
          </svg>
        </button>
      </div>

      <div className="relative flex flex-col border border-[#33507f] bg-[#f0f0f0] pr-2 pb-[25px] pl-2 shadow-[0_0_0_1px_#b4caee]">
        <div className="flex h-[45px] items-center pl-[38px]">
          <label htmlFor="lookin" className="w-[86px] pb-1.5">
            保存在(<u>I</u>):
          </label>
          <div className={clsx('flex h-[27px] w-[346px] items-stretch', sunken)}>
            <DesktopIcon className="m-1 mt-[5px] h-[15px] w-5" />
            <select id="lookin" className="min-w-0 flex-1 appearance-none bg-white pb-0.5 outline-none">
              <option>桌面</option>
            </select>
            <ComboArrow />
          </div>
          <LocationTools />
        </div>

        <div className="flex">
          <nav className="-mt-1.5 mr-[7px] w-[117px] shrink-0">
            {places.map((item, index) => (
              <button
                key={item.name}
                onClick={() => setPlace(index)}
                className={clsx(
                  'flex h-[62px] w-full flex-col items-center justify-end border pb-px whitespace-nowrap',
                  place === index
                    ? 'border-t-[#808080] border-r-white border-b-white border-l-[#808080] bg-[#f8f8f8]'
                    : 'border-transparent',
                )}
              >
                <span className="flex h-10 items-center">{item.icon}</span>
                <span>{item.name}</span>
              </button>
            ))}
          </nav>
          <div className="flex h-[356px] min-w-0 flex-1 overflow-hidden bg-white font-['Noto_Sans_CJK_SC',sans-serif]">
            <ul className="flex-1 pt-1 pl-1.5">
              {folders.map((folder) => (
                <li key={folder.name} className="flex h-[66px] items-center">
                  <span className="flex w-[65px] justify-start">{folder.icon}</span>
                  <span className="flex flex-col gap-0.5 pb-px">
                    <span>{folder.name}</span>
                    <span className="text-[#808080]">系统文件夹</span>
                  </span>
                </li>
              ))}
            </ul>
            <VScroll thumb="h-[111px]" />
          </div>
        </div>

        <div className="mt-[11px] flex pl-[127px]">
          <div className="flex w-[451px] flex-col gap-[11px]">
            <div className="flex h-[25px] items-stretch">
              <label htmlFor="filename" className="w-[125px] pt-[5px]">
                文件名(<u>N</u>):
              </label>
              <div className={clsx('flex flex-1 items-stretch', sunken)}>
                <input id="filename" className="min-w-0 flex-1 px-0.5 outline-none" />
                <ComboArrow />
              </div>
            </div>
            <div className="relative flex h-[25px] items-stretch">
              <label htmlFor="filetype" className="w-[125px] pt-px">
                保存类型(<u>T</u>):
              </label>
              <div className={clsx('flex flex-1 items-stretch', sunken)}>
                <select
                  id="filetype"
                  value={fileType}
                  onChange={(e) => setFileType(Number(e.target.value))}
                  className="min-w-0 flex-1 appearance-none bg-white pb-0.5 pl-px leading-[18px] outline-none"
                >
                  {fileTypes.map((type, index) => (
                    <option key={type} value={index}>
                      {type}
                    </option>
                  ))}
                </select>
                <ComboArrow />
              </div>
              {/* opened list of the file type box */}
              <ul className="absolute top-[23px] right-[-2px] left-[125px] border border-[#646464] bg-white leading-[15px]">
                {fileTypes.map((type, index) => (
                  <li
                    key={type}
                    onClick={() => setFileType(index)}
                    className={clsx('h-[15px] pl-0.5', fileType === index && 'bg-[#3399ff] text-white')}
                  >
                    {type}
                  </li>
                ))}
              </ul>
            </div>
          </div>
          <div className="ml-auto flex w-[119px] flex-col gap-1.5">
            <button className={clsx('h-7 pb-0.5 outline outline-[#646464]', raised)}>
              保存(<u>S</u>)
            </button>
            <button className={clsx('h-7 pb-0.5', raised)}>取消</button>
          </div>
        </div>

        <svg className="absolute right-0 bottom-0 h-3.5 w-3.5" viewBox="0 0 14 14">
          <path d="M0 14L14 0M5 14l9-9M10 14l4-4" stroke="#a0a0a0" strokeWidth="2" />
        </svg>
      </div>
    </div>
  );
}

/* ---------- red notes over the window ---------- */

function Annotation() {
  return (
    <>
      <div className="pointer-events-none absolute top-[681px] left-[826px] h-[27px] w-[365px] border-3 border-[#fb3a38]" />
      <svg className="pointer-events-none absolute top-[720px] left-[490px] h-[190px] w-[360px]" viewBox="0 0 360 190">
        <path d="M351 8.500L335 27.500l-2.500-4.500L21.500 182l-1-1.200L328 15l-3-6z" fill="#fb3a38" />
      </svg>
      <p className="absolute top-[901px] left-[359px] font-['Noto_Sans_CJK_SC',sans-serif] text-[37px] leading-[52px] font-light whitespace-nowrap text-[#fb3a38]">
        需求增加输出XLSX格式
      </p>
    </>
  );
}

export default function App() {
  return (
    <div className="relative flex h-screen flex-col overflow-hidden bg-[#ffffe0] font-['Noto_Sans_Mono_CJK_SC','Noto_Sans_CJK_SC',sans-serif] text-black">
      <Gradients />
      <TitleBar />
      <div className="flex min-h-0 flex-1">
        <Sidebar />
        <Splitter />
        <main className="flex min-w-0 flex-1 flex-col">
          <Toolbar />
          <div className="h-9" />
          <div className="flex-1 border-t border-[#a0a0a0] bg-white">
            <div className="h-[23px] w-[27px] border border-black bg-[#f0f0f0]" />
          </div>
        </main>
      </div>
      <ExportDialog />
      <Annotation />
    </div>
  );
}
